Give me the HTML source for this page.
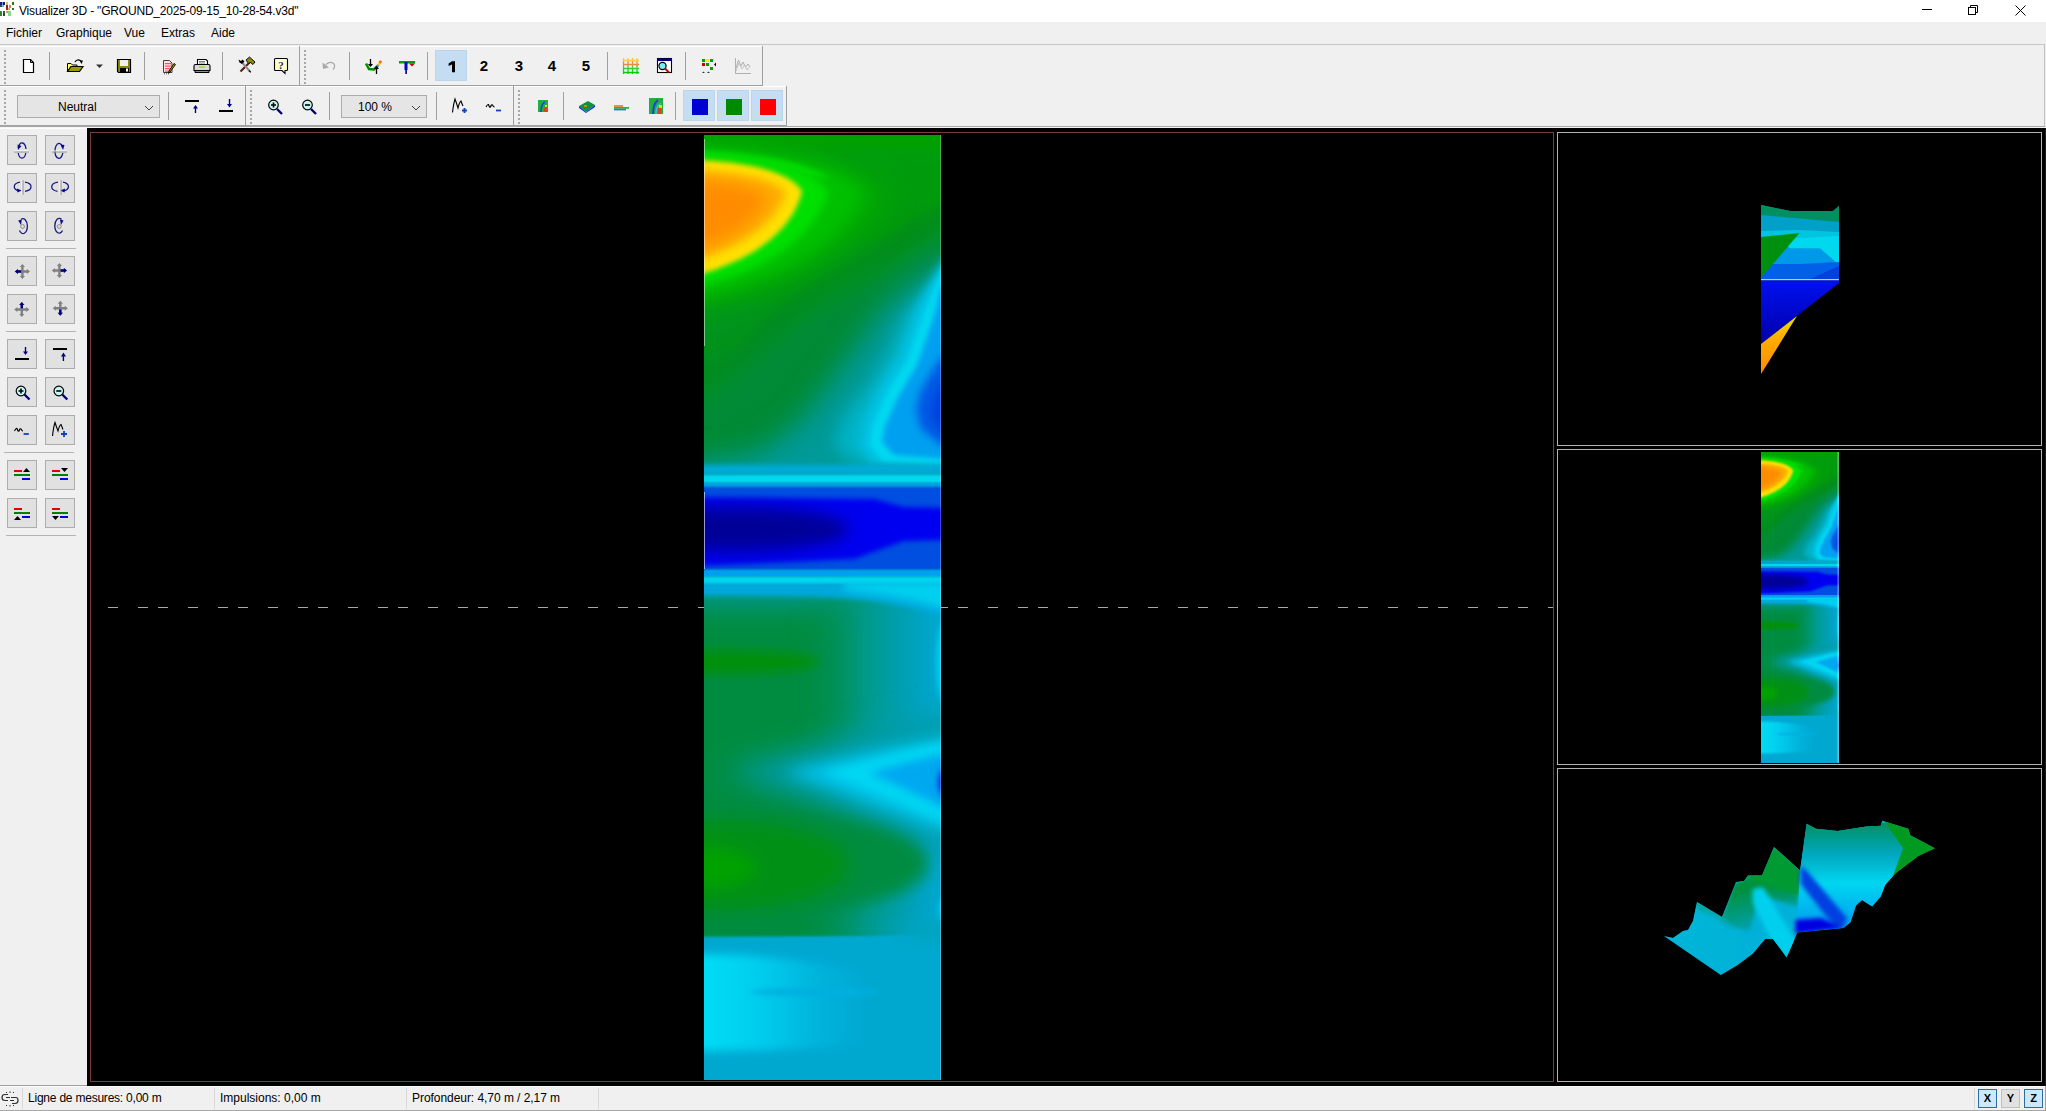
<!DOCTYPE html>
<html><head><meta charset="utf-8">
<style>
*{box-sizing:border-box;margin:0;padding:0}
html,body{width:2046px;height:1111px;overflow:hidden;background:#f0f0f0;font-family:"Liberation Sans",sans-serif;font-size:12px;color:#000}
.a{position:absolute}
.mi{position:absolute;top:27px;font-size:12px;color:#000;line-height:12px}
.st{position:absolute;top:1092px;font-size:12px;line-height:12px;color:#000}
svg{position:absolute;overflow:visible}
</style></head><body>
<!-- title bar -->
<div class="a" style="left:0;top:0;width:2046px;height:22px;background:#fff"></div>
<div class="a" style="left:19px;top:5px;font-size:12px;line-height:12px;letter-spacing:-0.19px">Visualizer 3D - "GROUND_2025-09-15_10-28-54.v3d"</div>
<!-- menu -->
<div class="mi" style="left:6px">Fichier</div>
<div class="mi" style="left:56px">Graphique</div>
<div class="mi" style="left:124px">Vue</div>
<div class="mi" style="left:161px">Extras</div>
<div class="mi" style="left:211px">Aide</div>
<svg style="left:0;top:0" width="2046" height="1111" viewBox="0 0 2046 1111" shape-rendering="crispEdges">
<!-- app icon -->
<g>
<rect x="0" y="2" width="1.5" height="2.5" fill="#102080"/><rect x="1.5" y="2" width="1.5" height="2.5" fill="#8090e0"/><rect x="3" y="2" width="1.5" height="2.5" fill="#102070"/>
<rect x="6" y="2" width="2" height="2.5" fill="#e0c050"/><rect x="11.5" y="2" width="2.5" height="2.5" fill="#307030"/>
<rect x="0" y="4.5" width="2" height="2.5" fill="#206020"/><rect x="2" y="4.5" width="2" height="2.5" fill="#70b0d0"/><rect x="5.5" y="5" width="2.5" height="2.5" fill="#902020"/><rect x="8.5" y="5" width="2.5" height="2.5" fill="#d08070"/>
<rect x="5.5" y="7.5" width="2.5" height="2.5" fill="#b02020"/><rect x="8" y="7.5" width="2" height="2.5" fill="#e0b060"/><rect x="11.5" y="7.5" width="2.5" height="2.5" fill="#307030"/>
<rect x="0" y="10.5" width="2" height="2.5" fill="#408040"/><rect x="2.5" y="10.5" width="2" height="2.5" fill="#306030"/><rect x="5.5" y="10.5" width="2.5" height="2.5" fill="#d09090"/><rect x="8" y="10.5" width="3" height="2.5" fill="#90d090"/>
<rect x="0" y="13" width="2" height="3" fill="#308030"/><rect x="2.5" y="13" width="2" height="3" fill="#205020"/><rect x="8" y="13" width="3" height="3" fill="#80e080"/>
</g>
<!-- window controls -->
<g stroke="#000" stroke-width="1" fill="none" shape-rendering="geometricPrecision">
<line x1="1922" y1="9.5" x2="1932" y2="9.5"/>
<rect x="1968.5" y="7.5" width="7" height="7"/>
<path d="M1970.5 7.5V5.5H1977.5V12.5H1975.5"/>
<path d="M2015.5 5.5L2025.5 15.5M2025.5 5.5L2015.5 15.5"/>
</g>
<!-- menu/rebar lines -->
<rect x="0" y="44" width="2045" height="1" fill="#c6c6c6"/>
<rect x="2044" y="44" width="1" height="83" fill="#c0c0c0"/>
<rect x="0" y="126" width="2045" height="1" fill="#a8a8a8"/>
<rect x="0" y="127" width="2045" height="1" fill="#f4f4f4"/>
<rect x="0" y="128" width="87" height="1" fill="#fcfcfc"/>
<!-- toolbar frames: top/left white, bottom/right grey -->
<g fill="#fff">
<rect x="0" y="46" width="299" height="1"/><rect x="300" y="46" width="462" height="1"/>
<rect x="0" y="86" width="245" height="1"/><rect x="246" y="86" width="267" height="1"/><rect x="514" y="86" width="272" height="1"/>
</g>
<g fill="#a0a0a0">
<rect x="0" y="85" width="763" height="1"/><rect x="299" y="46" width="1" height="40"/><rect x="762" y="46" width="1" height="40"/>
<rect x="0" y="125" width="787" height="1"/><rect x="245" y="86" width="1" height="40"/><rect x="513" y="86" width="1" height="40"/><rect x="786" y="86" width="1" height="40"/>
</g>
<!-- grips -->
<g fill="#a8a8a8">
<path d="M4 50h1.5v1.5h-1.5zM4 54h1.5v1.5h-1.5zM4 58h1.5v1.5h-1.5zM4 62h1.5v1.5h-1.5zM4 66h1.5v1.5h-1.5zM4 70h1.5v1.5h-1.5zM4 74h1.5v1.5h-1.5zM4 78h1.5v1.5h-1.5zM4 82h1.5v1.5h-1.5z"/>
<path d="M304 50h1.5v1.5h-1.5zM304 54h1.5v1.5h-1.5zM304 58h1.5v1.5h-1.5zM304 62h1.5v1.5h-1.5zM304 66h1.5v1.5h-1.5zM304 70h1.5v1.5h-1.5zM304 74h1.5v1.5h-1.5zM304 78h1.5v1.5h-1.5zM304 82h1.5v1.5h-1.5z"/>
<path d="M4 90h1.5v1.5h-1.5zM4 94h1.5v1.5h-1.5zM4 98h1.5v1.5h-1.5zM4 102h1.5v1.5h-1.5zM4 106h1.5v1.5h-1.5zM4 110h1.5v1.5h-1.5zM4 114h1.5v1.5h-1.5zM4 118h1.5v1.5h-1.5zM4 122h1.5v1.5h-1.5z"/>
<path d="M250 90h1.5v1.5h-1.5zM250 94h1.5v1.5h-1.5zM250 98h1.5v1.5h-1.5zM250 102h1.5v1.5h-1.5zM250 106h1.5v1.5h-1.5zM250 110h1.5v1.5h-1.5zM250 114h1.5v1.5h-1.5zM250 118h1.5v1.5h-1.5zM250 122h1.5v1.5h-1.5z"/>
<path d="M518 90h1.5v1.5h-1.5zM518 94h1.5v1.5h-1.5zM518 98h1.5v1.5h-1.5zM518 102h1.5v1.5h-1.5zM518 106h1.5v1.5h-1.5zM518 110h1.5v1.5h-1.5zM518 114h1.5v1.5h-1.5zM518 118h1.5v1.5h-1.5zM518 122h1.5v1.5h-1.5z"/>
</g>
<!-- separators -->
<g fill="#a0a0a0">
<rect x="49" y="52" width="1" height="28"/><rect x="144" y="52" width="1" height="28"/><rect x="222" y="52" width="1" height="28"/>
<rect x="349" y="52" width="1" height="28"/><rect x="427" y="52" width="1" height="28"/><rect x="607" y="52" width="1" height="28"/><rect x="685" y="52" width="1" height="28"/>
<rect x="168" y="92" width="1" height="28"/><rect x="329" y="92" width="1" height="28"/><rect x="436" y="92" width="1" height="28"/>
<rect x="563" y="92" width="1" height="28"/><rect x="675" y="92" width="1" height="28"/>
</g>
<!-- checked buttons -->
<g fill="#c5ddf3" stroke="#bad6ef">
<rect x="435.5" y="50.5" width="31" height="30"/>
<rect x="683.5" y="90.5" width="31" height="30"/>
<rect x="717.5" y="90.5" width="31" height="30"/>
<rect x="751.5" y="90.5" width="31" height="30"/>
</g>
<rect x="692" y="99" width="16" height="16" fill="#0000d4"/>
<rect x="726" y="99" width="16" height="16" fill="#008a00"/>
<rect x="760" y="99" width="16" height="16" fill="#ff0000"/>
<!-- combos -->
<g fill="#e5e5e5" stroke="#adadad">
<rect x="17.5" y="95.5" width="142" height="22"/>
<rect x="341.5" y="95.5" width="85" height="22"/>
</g>
<g fill="none" stroke="#404040" stroke-width="1" shape-rendering="geometricPrecision">
<path d="M145 106L149 110L153 106"/>
<path d="M412 106L416 110L420 106"/>
</g>

<!-- sidebar -->
<g fill="#e1e1e1" stroke="#adadad">
<rect x="7.5" y="135.5" width="29" height="29"/><rect x="45.5" y="135.5" width="29" height="29"/>
<rect x="7.5" y="173.5" width="29" height="29"/><rect x="45.5" y="173.5" width="29" height="29"/>
<rect x="7.5" y="211.5" width="29" height="29"/><rect x="45.5" y="211.5" width="29" height="29"/>
<rect x="7.5" y="256.5" width="29" height="29"/><rect x="45.5" y="256.5" width="29" height="29"/>
<rect x="7.5" y="294.5" width="29" height="29"/><rect x="45.5" y="294.5" width="29" height="29"/>
<rect x="7.5" y="339.5" width="29" height="29"/><rect x="45.5" y="339.5" width="29" height="29"/>
<rect x="7.5" y="377.5" width="29" height="29"/><rect x="45.5" y="377.5" width="29" height="29"/>
<rect x="7.5" y="415.5" width="29" height="29"/><rect x="45.5" y="415.5" width="29" height="29"/>
<rect x="7.5" y="460.5" width="29" height="29"/><rect x="45.5" y="460.5" width="29" height="29"/>
<rect x="7.5" y="498.5" width="29" height="29"/><rect x="45.5" y="498.5" width="29" height="29"/>
</g>
<g fill="#b4b4b4">
<rect x="6" y="248" width="70" height="1"/><rect x="6" y="331" width="70" height="1"/><rect x="4" y="452" width="70" height="1"/><rect x="6" y="535" width="70" height="1"/>
</g>
<rect x="0" y="1085" width="87" height="1" fill="#a0a0a0"/>

<!-- main black -->
<rect x="87" y="128" width="1958" height="958" fill="#000"/>
<rect x="2045" y="128" width="1" height="958" fill="#1c1c1c"/>
<!-- dashed line -->
<line x1="108" y1="607.5" x2="1553" y2="607.5" stroke="#a8a8a8" stroke-width="1" stroke-dasharray="10 20 10 10 10 20"/>
<g fill="none" shape-rendering="crispEdges">
<rect x="90.5" y="132.5" width="1463" height="949" stroke="#7c3c3c"/>
<rect x="1557.5" y="132.5" width="484" height="313" stroke="#b4b4b4"/>
<rect x="1557.5" y="449.5" width="484" height="315" stroke="#b4b4b4"/>
<rect x="1557.5" y="768.5" width="484" height="313" stroke="#b4b4b4"/>
</g>

<!-- status bar -->
<rect x="0" y="1086" width="2046" height="1" fill="#fafafa"/>
<rect x="0" y="1110" width="2046" height="1" fill="#a8a8a8"/>
<g fill="#d8d8d8">
<rect x="22" y="1088" width="1" height="21"/><rect x="214" y="1088" width="1" height="21"/><rect x="406" y="1088" width="1" height="21"/><rect x="598" y="1088" width="1" height="21"/><rect x="1974" y="1088" width="1" height="21"/>
</g>
<rect x="1978.5" y="1089.5" width="18" height="18" fill="#cce8ff" stroke="#2d6ba3"/>
<rect x="2001.5" y="1089.5" width="18" height="18" fill="#e1e1e1" stroke="#c0c0c0"/>
<rect x="2024.5" y="1089.5" width="18" height="18" fill="#cce8ff" stroke="#2d6ba3"/>
<rect x="2045" y="1086" width="1" height="25" fill="#a0a0a0"/>
</svg>
<svg style="left:0;top:0" width="2046" height="1111" viewBox="0 0 2046 1111">
<defs>
<linearGradient id="gim" x1="0" y1="1" x2="1" y2="0"><stop offset="0" stop-color="#008000"/><stop offset="0.45" stop-color="#00a000"/><stop offset="0.55" stop-color="#3060d0"/><stop offset="0.75" stop-color="#f0e000"/><stop offset="1" stop-color="#ff3000"/></linearGradient>
<linearGradient id="ggrid" x1="0" y1="0" x2="0" y2="1"><stop offset="0" stop-color="#ffd040"/><stop offset="0.3" stop-color="#ff8040"/><stop offset="0.6" stop-color="#40d040"/><stop offset="1" stop-color="#00d000"/></linearGradient>
</defs>
<!-- new doc -->
<path d="M23.5,59.5H30.5L33.5,62.5V72.5H23.5Z" fill="#fff" stroke="#000" stroke-width="1.2"/>
<path d="M30.5,59.5V62.5H33.5" fill="none" stroke="#000" stroke-width="1"/>
<!-- open folder -->
<path d="M67.5,63.5H71L72.5,65H77V66.5H71L67.5,71.5Z" fill="#ffff70" stroke="#000" stroke-width="1"/>
<path d="M67.5,71.5L71,66.5H83L79.5,71.5Z" fill="#9a9a00" stroke="#000" stroke-width="1.2"/>
<path d="M75,62 Q77,58.5 81,61" fill="none" stroke="#000" stroke-width="1.2"/>
<path d="M79.5,60.5L83,60.5L81.5,64Z" fill="#000"/>
<path d="M96,64.5H103L99.5,68Z" fill="#333"/>
<!-- save -->
<path d="M117.5,59.5H130.5V72.5H118.5L117.5,71.5Z" fill="#8a8a00" stroke="#000" stroke-width="1.2"/>
<rect x="120" y="60" width="8" height="6" fill="#f0f0f0"/>
<rect x="120" y="68" width="9" height="4.5" fill="#000"/>
<rect x="126" y="68.5" width="2" height="3" fill="#fff"/>
<!-- edit doc -->
<path d="M163.5,60.5H169.5L172,63V72.5H163.5Z" fill="#ffe0e0" stroke="#404040" stroke-width="1"/>
<g fill="#ff5060"><rect x="165" y="63" width="6" height="1.2"/><rect x="165" y="65.5" width="6" height="1.2"/><rect x="165" y="68" width="6" height="1.2"/><rect x="165" y="70.5" width="6" height="1.2"/></g>
<path d="M175.5,64.5L170,72L168.5,73.5L169,71L174,63.5Z" fill="#a0a000" stroke="#000" stroke-width="0.9"/>
<g fill="#505050"><rect x="164" y="73.3" width="1" height="1"/><rect x="166" y="73.3" width="1" height="1"/><rect x="168" y="73.3" width="1" height="1"/></g>
<!-- printer -->
<path d="M197.5,64.5V59.5H206L207.5,61V64.5" fill="#fff" stroke="#000" stroke-width="1.1"/>
<path d="M199,61.5H205M199,63H205" stroke="#606060" stroke-width="0.8"/>
<path d="M195.5,64.5H208.5Q210,64.5 210,66V70.5H194V66Q194,64.5 195.5,64.5Z" fill="#d8d8d8" stroke="#000" stroke-width="1.1"/>
<rect x="199" y="66.5" width="6" height="1.2" fill="#80e000"/>
<path d="M195,70.5H209V72.5H195Z" fill="#909090" stroke="#000" stroke-width="1"/>
<!-- tools -->
<path d="M240.5,71.5L250.5,61.5" stroke="#5a1a10" stroke-width="2.2"/>
<path d="M246,60L249.5,57L255,62L253,64.5L250.5,62.5L248.5,63.5Z" fill="#8a8a00" stroke="#000" stroke-width="0.9"/>
<path d="M250,71.5L242.5,63" stroke="#909090" stroke-width="2"/>
<path d="M238.5,59.5L239.5,62.5L242,64L244.5,61.5L242.5,59.5L241,61Z" fill="#000"/>
<path d="M249,70.5L250.8,72.3" stroke="#000" stroke-width="1.2"/>
<!-- help -->
<path d="M275.5,58.5H286.5Q287.5,58.5 287.5,59.5V69.5Q287.5,70.5 286.5,70.5H285V73.5L282,70.5H275.5Q274.5,70.5 274.5,69.5V59.5Q274.5,58.5 275.5,58.5Z" fill="#ffffc8" stroke="#000" stroke-width="1.1"/>
<text x="281" y="68.5" font-family="Liberation Serif" font-weight="bold" font-size="11" fill="#202090" text-anchor="middle">?</text>
<path d="M452,61.2H455V72.2H452V64.6L448.6,66V63.6Z" fill="#000"/>
<!-- undo grey -->
<path d="M326,64.5 Q330,61 333.5,63.5 Q336,66 333,69.5" fill="none" stroke="#a8a8a8" stroke-width="1.2"/>
<path d="M322.5,62.5L323,69L329,67.5Z" fill="#a8a8a8"/>
<!-- import -->
<path d="M366,63.5L369,69L374,69.5L378,65.5L381,61" fill="none" stroke="url(#gim)" stroke-width="2.6"/>
<path d="M370.5,59V66" stroke="#000" stroke-width="1.3"/><path d="M368,64H373L370.5,67Z" fill="#000"/>
<path d="M376.5,74V67" stroke="#000" stroke-width="1.3"/><path d="M374,69H379L376.5,66Z" fill="#000"/>
<!-- T icon -->
<rect x="399" y="61" width="16" height="2.5" fill="#00a000"/>
<rect x="404.5" y="62" width="3" height="8" fill="#0000d0"/>
<rect x="405.3" y="69" width="1.6" height="5" fill="#000080"/>
<path d="M409,63.5H415L412,66.5Z" fill="#d00000"/>
<!-- grid -->
<g stroke="url(#ggrid)" stroke-width="1.3" fill="none">
<path d="M623.5,58V74M628,58V74M632.5,58V74M637,58V74"/>
<path d="M623,60.5H639M623,64.5H639M623,68.5H639M623,72.5H639"/>
</g>
<!-- window search -->
<rect x="657.5" y="58.5" width="14" height="14" fill="#fff" stroke="#000" stroke-width="1.1"/>
<rect x="657.5" y="58.5" width="14" height="2.5" fill="#000080"/>
<circle cx="662.5" cy="66" r="3.6" fill="#80e8f0" stroke="#000" stroke-width="1.2"/>
<path d="M665,68.5L669,72.5" stroke="#c00000" stroke-width="1.8"/>
<!-- dots icon -->
<g fill="#00a000"><rect x="702" y="59" width="3" height="3"/><rect x="710" y="59" width="3" height="3"/><rect x="706" y="63" width="3" height="3"/><rect x="710" y="67" width="3" height="3"/></g>
<rect x="706" y="59" width="3" height="3" fill="#f0f000"/>
<rect x="702" y="63" width="3" height="3" fill="#d00000"/>
<path d="M716,62.5L714,64.5L716,66.5Z" fill="#000"/>
<path d="M702,73H705L703.5,71.5ZM707,73H710L708.5,71.5Z" fill="#303030"/>
<!-- chart grey -->
<path d="M735.5,58V73.5H751" fill="none" stroke="#b0b0b0" stroke-width="1"/>
<path d="M736,68L738.5,60L741,66L743,62L745.5,67L748,64L750,67" fill="none" stroke="#b0b0b0" stroke-width="1"/>
<path d="M736,71L739,63L742,69L744.5,65L747,70L750,66" fill="none" stroke="#c4c4c4" stroke-width="1"/>

<!-- row 2 -->
<rect x="185" y="100" width="14" height="2" fill="#000"/>
<path d="M195.5,113V107" stroke="#000080" stroke-width="1.4"/><path d="M193,108.5H198L195.5,105Z" fill="#000080"/>
<rect x="219" y="110" width="14" height="2" fill="#000"/>
<path d="M229.5,99V105" stroke="#000080" stroke-width="1.4"/><path d="M227,104H232L229.5,107.5Z" fill="#000080"/>
<!-- zoom -->
<path d="M277,109L282,114" stroke="#000080" stroke-width="2.4"/>
<circle cx="273.5" cy="105" r="4.8" fill="#c8f4f4" stroke="#000" stroke-width="1.2"/>
<path d="M271,105H276M273.5,102.5V107.5" stroke="#000" stroke-width="1.6"/>
<path d="M311,109L316,114" stroke="#000080" stroke-width="2.4"/>
<circle cx="307.5" cy="105" r="4.8" fill="#c8f4f4" stroke="#000" stroke-width="1.2"/>
<path d="M305,105H310" stroke="#000" stroke-width="1.6"/>
<!-- M+ m- -->
<path d="M452.5,112.5Q453.5,104 455,99Q456.5,103 458,108Q459.5,102 461,101Q462,104 463,106" fill="none" stroke="#000" stroke-width="1.1"/>
<path d="M462,110.5H467M464.5,108V113" stroke="#1040c0" stroke-width="1.8"/>
<path d="M486,107Q487.5,104 488.5,104.5Q489.5,108 490.5,107Q491.5,104 492.5,105Q493.5,107 494.5,107" fill="none" stroke="#000" stroke-width="1.1"/>
<path d="M496,110.5H501" stroke="#1040c0" stroke-width="1.8"/>
<!-- heat icons -->
<rect x="538" y="100" width="10" height="12" fill="#20b040"/>
<path d="M541,112Q541,104 545,102" fill="none" stroke="#2040e0" stroke-width="1.6"/>
<rect x="544" y="107" width="3" height="5" fill="#e04020"/><rect x="545" y="105" width="2" height="2" fill="#e0e000"/>
<path d="M579,106L588,101L595,105L586,112Z" fill="#109040"/>
<path d="M579,106L586,112L595,105L595,107L586,113L579,108Z" fill="#1030e0"/>
<rect x="584" y="105" width="3" height="2" fill="#e08000"/>
<rect x="614" y="105" width="9" height="2" fill="#f09040"/>
<rect x="614" y="107" width="15" height="1.8" fill="#30b040"/>
<rect x="614" y="108.8" width="12" height="1.6" fill="#2080d0"/>
<rect x="649" y="98" width="14" height="16" fill="#20b040"/>
<path d="M653,114Q653,104 658,100" fill="none" stroke="#2040e0" stroke-width="2"/>
<path d="M656,114Q656,106 661,103" fill="none" stroke="#40c0f0" stroke-width="1.2"/>
<rect x="658" y="108" width="3" height="6" fill="#e04020"/><rect x="659" y="105" width="3" height="3" fill="#e0e000"/>

<!-- status icon -->
<g fill="none" stroke="#303030" stroke-width="1.2">
<path d="M8,1094.5H5Q2,1094.5 2,1097.5Q2,1100.5 5,1100.5H8M11,1097.5H16Q18,1097.5 18,1100.5Q18,1103.5 15,1103.5H12"/>
<path d="M6,1097.5H10M10,1100.5H14"/>
<path d="M6,1092L7,1093M10,1091.5V1093M14,1092L13,1093M6,1106L7,1105M10,1106.5V1105M14,1106L13,1105" stroke-width="1"/>
</g>
</svg>
<svg style="left:0;top:0" width="100" height="1111" viewBox="0 0 100 1111">
<g fill="none" stroke="#1a1a80" stroke-width="1.3">
<!-- row1 A: horizontal axis -->
<path d="M18.3,148 A4,7.5 0 0 1 26,149"/>
<path d="M18.2,153 A4,7.5 0 0 0 25.8,153"/>
<!-- row1 B -->
<path d="M56,146 A4,7.5 0 0 1 62.5,147 M55,150 A4,7.5 0 0 0 62.8,153"/>
<path d="M55,150 A4,7.5 0 0 1 56,146"/>
<!-- row2 A: vertical axis -->
<path d="M20,182.2 A8,4.7 0 0 0 19,191 M25,182.2 A8,4.7 0 0 1 25,191.3"/>
<!-- row2 B -->
<path d="M58,182.2 A8,4.7 0 0 0 57.5,191.3 M63,182.2 A8,4.7 0 0 1 63.5,191"/>
<!-- row3 A -->
<path d="M21,219.5 A4.4,7.8 0 0 1 27.4,226 A4.4,7.8 0 0 1 19.5,230.5"/>
<!-- row3 B -->
<path d="M61.5,219.5 A4.4,7.8 0 0 0 54.8,226 A4.4,7.8 0 0 0 62.5,230.5"/>
</g>
<g fill="#0a0a90">
<path d="M17.5,144.5L21.5,146L18,150Z"/>
<path d="M60.5,144.5L64.5,145L63,150Z"/>
<path d="M16.8,188.5L21.8,190.5L17.5,192.5Z"/>
<path d="M65,188.5L60.2,190.5L64.5,192.5Z"/>
<path d="M18.2,220.5L21.8,219.5L21,225Z"/>
<path d="M63.5,220.5L60,219.5L61,225Z"/>
</g>
<!-- axis lines -->
<rect x="14" y="150.5" width="15" height="1" fill="#fff"/><rect x="14" y="151.5" width="15" height="1" fill="#909090"/>
<rect x="52" y="150.5" width="15" height="1" fill="#fff"/><rect x="52" y="151.5" width="15" height="1" fill="#909090"/>
<rect x="21.5" y="180" width="1" height="15" fill="#fff"/><rect x="22.5" y="180" width="1" height="15" fill="#909090"/>
<rect x="59.5" y="180" width="1" height="15" fill="#fff"/><rect x="60.5" y="180" width="1" height="15" fill="#909090"/>
<circle cx="22.6" cy="226.5" r="2" fill="#d8d8d8" stroke="#808080" stroke-width="0.8"/>
<circle cx="59.2" cy="226.5" r="2" fill="#d8d8d8" stroke="#808080" stroke-width="0.8"/>
<!-- four-way arrows -->
<g id="fw">
<path d="M22.4,264L25,267H23.6V270.3H26.9V269L30,271.5L26.9,274V272.7H23.6V276H25L22.4,279L19.8,276H21.2V272.7H17.9V274L14.8,271.5L17.9,269V270.3H21.2V267H19.8Z" fill="#808080"/>
</g>
<path d="M14.8,271.5L17.9,269V270.3H21.2V272.7H17.9V274Z" fill="#000080"/>
<use href="#fw" transform="translate(37,-1)"/>
<path d="M67,270.5L63.9,268V269.3H60.6V271.7H63.9V273Z" fill="#000080"/>
<use href="#fw" transform="translate(-0.6,38)"/>
<path d="M21.8,302L24.4,305H23V308.3H20.6V305H19.2Z" fill="#000080"/>
<use href="#fw" transform="translate(37.9,36.7)"/>
<path d="M60.3,315.7L62.9,312.7H61.5V309.4H59.1V312.7H57.7Z" fill="#000080"/>
<!-- row6 -->
<rect x="15" y="358" width="14" height="2" fill="#000"/>
<path d="M25.5,347V352" stroke="#000080" stroke-width="1.4"/><path d="M23,351.5H28L25.5,355Z" fill="#000080"/>
<rect x="53" y="348" width="14" height="2" fill="#000"/>
<path d="M63.4,361V356" stroke="#000080" stroke-width="1.4"/><path d="M61,356.5H66L63.4,352.5Z" fill="#000080"/>
<!-- row7 zoom -->
<path d="M24.5,394.5L29.5,399.5" stroke="#000080" stroke-width="2.4"/>
<circle cx="21" cy="391" r="4.8" fill="#c8f4f4" stroke="#000" stroke-width="1.2"/>
<path d="M18.5,391H23.5M21,388.5V393.5" stroke="#000" stroke-width="1.6"/>
<path d="M62.3,394.5L67.3,399.5" stroke="#000080" stroke-width="2.4"/>
<circle cx="58.8" cy="391" r="4.8" fill="#c8f4f4" stroke="#000" stroke-width="1.2"/>
<path d="M56.3,391H61.3" stroke="#000" stroke-width="1.6"/>
<!-- row8 -->
<path d="M14.5,431Q16,428 17,428.5Q18,432 19,431Q20,428 21,429Q22,431 23,431" fill="none" stroke="#000" stroke-width="1.1"/>
<path d="M23.6,434H28.8" stroke="#1040c0" stroke-width="1.8"/>
<path d="M52.5,436Q53.5,427 55,422.5Q56.5,427 58,431Q59.5,425 61,424.5Q62,427 63,429.5" fill="none" stroke="#000" stroke-width="1.1"/>
<path d="M61,434H67M64,431V437" stroke="#1040c0" stroke-width="1.8"/>
<!-- rows 9-10 -->
<g>
<rect x="14" y="470" width="8" height="2" fill="#e00000"/><rect x="14" y="474" width="16" height="2" fill="#008000"/><rect x="22" y="478" width="8" height="2" fill="#0000e0"/>
<path d="M23,472H30L26.5,468Z" fill="#000"/>
<rect x="52" y="470" width="8" height="2" fill="#e00000"/><rect x="52" y="474" width="16" height="2" fill="#008000"/><rect x="60" y="478" width="8" height="2" fill="#0000e0"/>
<path d="M61,468H68L64.5,472Z" fill="#000"/>
<rect x="14" y="508" width="8" height="2" fill="#e00000"/><rect x="14" y="512" width="16" height="2" fill="#008000"/><rect x="22" y="516" width="8" height="2" fill="#0000e0"/>
<path d="M14,520H21L17.5,516Z" fill="#000"/>
<rect x="52" y="508" width="8" height="2" fill="#e00000"/><rect x="52" y="512" width="16" height="2" fill="#008000"/><rect x="60" y="516" width="8" height="2" fill="#0000e0"/>
<path d="M52,516H59L55.5,520Z" fill="#000"/>
</g>
</svg>
<svg style="left:704px;top:135px" width="237" height="945" viewBox="0 0 237 945" preserveAspectRatio="none">
<defs>
<clipPath id="hc"><rect x="0" y="0" width="237" height="945"/></clipPath>
<filter id="f1" filterUnits="userSpaceOnUse" x="-80" y="-80" width="400" height="1110"><feGaussianBlur stdDeviation="1.2"/></filter>
<filter id="f2" filterUnits="userSpaceOnUse" x="-80" y="-80" width="400" height="1110"><feGaussianBlur stdDeviation="2.5"/></filter>
<filter id="f4" filterUnits="userSpaceOnUse" x="-80" y="-80" width="400" height="1110"><feGaussianBlur stdDeviation="4"/></filter>
<filter id="f8" filterUnits="userSpaceOnUse" x="-80" y="-80" width="400" height="1110"><feGaussianBlur stdDeviation="8"/></filter>
<filter id="f14" filterUnits="userSpaceOnUse" x="-80" y="-80" width="400" height="1110"><feGaussianBlur stdDeviation="14"/></filter>
<linearGradient id="gnav" x1="0" x2="1" y1="0" y2="0"><stop offset="0" stop-color="#000098"/><stop offset="0.45" stop-color="#0000d8"/><stop offset="0.8" stop-color="#0000ff"/><stop offset="1" stop-color="#0000ff"/></linearGradient>
</defs>
<g id="heatg" clip-path="url(#hc)">
<!-- base seagreen -->
<rect x="-20" y="-20" width="280" height="990" fill="#008c40"/>
<!-- top green region -->
<linearGradient id="ggr" x1="0" x2="0" y1="0" y2="1" gradientUnits="objectBoundingBox"><stop offset="0" stop-color="#009e06"/><stop offset="0.4" stop-color="#009812"/><stop offset="0.7" stop-color="#009220"/><stop offset="1" stop-color="#008c34"/></linearGradient>
<path d="M-30,-30 L270,-30 L270,80 L180,140 L90,200 L30,260 L-30,330 Z" fill="url(#ggr)" filter="url(#f14)"/>
<rect x="-20" y="-20" width="280" height="34" fill="#00a000" filter="url(#f4)"/>
<!-- dark green diagonal -->
<path d="M260,70 L96,165 L41,220 L-20,255" fill="none" stroke="#008a1c" stroke-width="16" filter="url(#f8)"/>
<path d="M270,90 L200,130 L120,170 L60,215 L-30,300 L-30,330 L270,330 Z" fill="#008a34" filter="url(#f14)"/>
<!-- teal region top-right -->
<path d="M270,112 L225,135 L180,172 L150,215 L125,250 L95,288 L55,318 L-30,332 L-30,470 L270,470 Z" fill="#009a98" filter="url(#f14)"/>
<path d="M270,128 L226,150 L200,180 L186,215 L165,250 L140,282 L130,310 L150,328 L270,330 Z" fill="#00b4c8" filter="url(#f8)"/>
<!-- bright green halo -->
<path d="M-30,10 C80,10 160,30 185,58 C165,110 90,160 -30,175 Z" fill="#00aa06" filter="url(#f14)"/>
<path d="M-30,13 C70,13 140,30 160,57 C145,102 80,152 -30,165 Z" fill="#00c000" filter="url(#f8)"/>
<path d="M-30,17 C60,18 110,34 124,57 C114,94 70,140 -30,155 Z" fill="#00e000" filter="url(#f4)"/>
<path d="M-30,17 C60,17 105,29 128,44 C100,40 70,33 -30,27 Z" fill="#00dc00" filter="url(#f2)"/>
<!-- yellow -->
<path d="M-30,24 C45,25 86,37 98,56 C92,84 64,126 -30,146 Z" fill="#ffe000" filter="url(#f2)"/>
<!-- orange -->
<path d="M-30,36 C40,36 72,45 82,58 C74,80 50,112 -30,131 Z" fill="#ffae00" filter="url(#f4)"/>
<path d="M-30,44 C25,44 57,53 64,62 C57,80 38,104 -30,121 Z" fill="#ff8c00" filter="url(#f8)"/>
<!-- cyan ridge region top-right -->
<path d="M270,110 L237,128 L213,172 L195,222 L176,252 L160,286 L156,310 L166,328 L270,332 Z" fill="#00c2e4" filter="url(#f4)"/>
<path d="M270,120 L237,136 L221,176 L203,226 L184,256 L169,289 L166,310 L178,326 L270,330 Z" fill="#00d8f0" filter="url(#f2)"/>
<path d="M270,140 L237,152 L230,182 L213,230 L195,260 L181,291 L178,307 L190,320 L270,326 Z" fill="#00a0f0" filter="url(#f2)"/>
<path d="M270,215 L237,222 L227,238 L216,257 L212,275 L217,294 L237,310 L270,312 Z" fill="#0058e4" filter="url(#f4)"/>
<path d="M270,245 L237,250 L230,265 L228,280 L237,296 L270,298 Z" fill="#0040e0" filter="url(#f4)"/>
<!-- horizontal bands -->
<rect x="-20" y="330" width="280" height="10" fill="#00aad8" filter="url(#f2)"/>
<rect x="-20" y="340" width="280" height="8" fill="#00d8f0" filter="url(#f1)"/>
<rect x="-20" y="348" width="280" height="4" fill="#00a0f0" filter="url(#f1)"/>
<rect x="-20" y="352" width="280" height="83" fill="#0050e0" filter="url(#f1)"/>
<path d="M-30,362 L170,364 L200,372 L270,373 L270,404 L200,406 L150,424 L-30,432 Z" fill="#0000f0" filter="url(#f2)"/>
<ellipse cx="30" cy="394" rx="115" ry="22" fill="#000098" filter="url(#f8)"/>
<rect x="-20" y="435" width="280" height="7" fill="#00a0f0" filter="url(#f1)"/>
<rect x="-20" y="442" width="280" height="8" fill="#00d8f0" filter="url(#f1)"/>
<rect x="-20" y="450" width="280" height="8" fill="#00a8e0" filter="url(#f1)"/>
<!-- lower section -->
<linearGradient id="gteal" gradientUnits="userSpaceOnUse" x1="90" y1="0" x2="237" y2="0"><stop offset="0" stop-color="#008c40" stop-opacity="0"/><stop offset="0.5" stop-color="#009a8c"/><stop offset="0.85" stop-color="#00a2c2"/><stop offset="1" stop-color="#00a8d0"/></linearGradient>
<rect x="90" y="455" width="180" height="350" fill="url(#gteal)" filter="url(#f4)"/>
<path d="M-30,449 L270,449 L270,494 Q230,472 150,464 Q80,460 -30,460 Z" fill="#00a8dc" filter="url(#f2)"/>
<path d="M140,447 L270,447 L270,486 Q225,464 140,455 Z" fill="#00d0f0" filter="url(#f4)"/>
<ellipse cx="242" cy="527" rx="10" ry="44" fill="#00ccf0" filter="url(#f2)"/>
<ellipse cx="242" cy="776" rx="8" ry="14" fill="#00c8f0" filter="url(#f2)"/>
<!-- green bands left -->
<ellipse cx="20" cy="527" rx="95" ry="12" fill="#009010" filter="url(#f4)"/>
<!-- V shape -->
<path d="M20,637 C100,615 180,586 270,576 L270,722 C180,694 100,662 20,637 Z" fill="#009ca8" filter="url(#f14)"/>
<path d="M80,637 C130,626 190,608 270,598 L270,708 C190,680 130,652 80,637 Z" fill="#00c4ea" filter="url(#f8)"/>
<path d="M120,637 C160,628 210,612 270,602 L270,700 C210,675 160,650 120,637 Z" fill="#00d6f2" filter="url(#f4)"/>
<path d="M165,638 C195,630 225,620 270,614 L270,686 C225,667 195,650 165,638 Z" fill="#00a8f0" filter="url(#f4)"/>
<ellipse cx="244" cy="648" rx="9" ry="17" fill="#0060e8" filter="url(#f4)"/>
<ellipse cx="238" cy="647" rx="3" ry="10" fill="#0030e0" filter="url(#f2)"/>
<!-- D green -->
<ellipse cx="90" cy="728" rx="135" ry="48" fill="#008c40" filter="url(#f8)"/>
<ellipse cx="20" cy="730" rx="125" ry="45" fill="#009014" filter="url(#f8)"/>
<ellipse cx="-10" cy="733" rx="62" ry="22" fill="#00a200" filter="url(#f8)"/>
<!-- bottom -->
<path d="M-30,802 L160,801 L270,797 L270,970 L-30,970 Z" fill="#00a8d0" filter="url(#f1)"/>
<path d="M180,802 L215,790 L270,775 L270,810 Z" fill="#00a4c0" filter="url(#f8)"/>
<linearGradient id="gcy" gradientUnits="userSpaceOnUse" x1="0" y1="0" x2="160" y2="0"><stop offset="0" stop-color="#00dcf4"/><stop offset="0.35" stop-color="#00cdee"/><stop offset="0.7" stop-color="#00b4dc"/><stop offset="1" stop-color="#00a8d0"/></linearGradient>
<path d="M-30,818 L40,820 Q140,828 200,850 Q150,880 200,905 Q100,917 -30,916 Z" fill="url(#gcy)" filter="url(#f4)"/>
<ellipse cx="110" cy="857" rx="65" ry="4" fill="#00b0e0" filter="url(#f2)"/>
</g>
<rect x="0" y="4" width="1" height="207" fill="rgba(255,255,255,0.5)"/>
<rect x="0" y="357" width="1" height="77" fill="rgba(255,255,255,0.6)"/>
<rect x="236" y="0" width="1" height="945" fill="rgba(255,255,255,0.25)"/>
</svg>
<!-- P2: scaled heatmap -->
<svg style="left:1761px;top:452px" width="78" height="311" viewBox="0 0 237 945" preserveAspectRatio="none"><use href="#heatg"/><rect x="232" y="0" width="5" height="945" fill="rgba(255,255,255,0.35)"/></svg>
<!-- P1 + P3 -->
<svg style="left:0;top:0" width="2046" height="1111" viewBox="0 0 2046 1111">
<defs>
<linearGradient id="p1b" x1="0" y1="0" x2="0" y2="1"><stop offset="0" stop-color="#0010f0"/><stop offset="1" stop-color="#0000a8"/></linearGradient>
<linearGradient id="p1o" x1="0" y1="0" x2="0" y2="1"><stop offset="0" stop-color="#e8e000"/><stop offset="0.35" stop-color="#ffb000"/><stop offset="1" stop-color="#ff8800"/></linearGradient>
<linearGradient id="p3r" x1="0" y1="0" x2="0" y2="1"><stop offset="0" stop-color="#009060"/><stop offset="0.3" stop-color="#00a8c0"/><stop offset="0.55" stop-color="#00d6f0"/><stop offset="1" stop-color="#0098f0"/></linearGradient>
<linearGradient id="p3l" x1="0" y1="0" x2="1" y2="1"><stop offset="0" stop-color="#00d0ec"/><stop offset="0.5" stop-color="#00b0d8"/><stop offset="1" stop-color="#00c0e0"/></linearGradient>
<linearGradient id="p3g" x1="0" y1="0" x2="0.3" y2="1"><stop offset="0" stop-color="#009a20"/><stop offset="0.6" stop-color="#009040"/><stop offset="1" stop-color="#00a0a0"/></linearGradient>
<clipPath id="p3c"><path d="M1664,936 L1673,938 L1683,931 L1688,930 L1693,921 L1697,902 L1722,917 L1736,882 L1744,881 L1748,875.5 L1762,875.5 L1774,847 L1800,870.5 L1806.6,823.7 L1816,828.7 L1837.6,830.9 L1866.4,826.6 L1880.8,825.8 L1882.2,820.8 L1908.2,828.7 L1910.3,835.2 L1934.8,848.2 L1918.2,856 L1895.2,873.4 L1885.1,884.9 L1880.8,896.4 L1872.2,906.5 L1862.1,900 L1856.3,905 L1850.6,922.3 L1843.4,928.1 L1797.3,932.4 L1794.4,939.6 L1786.6,957.4 L1772.9,939 L1765.2,939 L1753,953.5 L1737.7,965 L1720.8,975 Z"/></clipPath>
<filter id="pb" x="-20%" y="-20%" width="140%" height="140%"><feGaussianBlur stdDeviation="2"/></filter>
</defs>
<!-- P1 -->
<path d="M1761,205 L1790,211 L1833,211 L1839,206 L1839,280 L1761,280 Z" fill="#00a0c8"/>
<path d="M1761,205 L1790,211 L1833,211 L1839,206 L1839,222 L1761,215 Z" fill="#008f60"/>
<path d="M1761,231 L1800,230 L1839,232 L1839,240 L1761,238 Z" fill="#00c4e0"/>
<path d="M1780,239 L1839,236 L1839,265 L1820,248.5 L1790,248.5 Z" fill="#00d8f0"/>
<path d="M1770,248.5 L1820,248.5 L1839,265 L1839,278 L1761,278 Z" fill="#0098e8"/>
<path d="M1761,264 L1800,264 L1839,262 L1839,279 L1761,279 Z" fill="#0060e8"/>
<path d="M1810,279 L1839,266 L1839,279 Z" fill="#0040e0"/>
<path d="M1761,237 L1799.5,233 L1761,278 Z" fill="#009010"/>
<rect x="1761" y="279" width="78" height="1.5" fill="#a8d0ff"/>
<path d="M1761,280.5 L1839,280.5 L1839,283 L1761,344 Z" fill="url(#p1b)"/>
<path d="M1797,316 L1761,344 L1761,374 Z" fill="url(#p1o)"/>
<!-- P3 -->
<g clip-path="url(#p3c)">
<rect x="1650" y="810" width="300" height="180" fill="url(#p3l)"/>
<path d="M1694,900 L1721.8,917.2 L1733.8,883.8 L1745.8,877.8 L1762.9,875.3 L1774.8,847.9 L1800.5,870.1 L1797.1,906 L1759.5,895.8 L1750,930 L1728,928 L1712,915 L1700,912 Z" fill="url(#p3g)" filter="url(#pb)"/>
<path d="M1664,936 L1697,902 L1722,917 L1745,935 L1738,965 L1721,975 Z" fill="#00b4d6" filter="url(#pb)" opacity="0.6"/>
<path d="M1774,847 L1800,870.5 L1798,895 L1765,885 L1745,878 Z" fill="#009a30" filter="url(#pb)"/>
<path d="M1752.6,888.9 L1762.9,887.2 L1797.1,943.7 L1786.8,957.3 L1769.7,936.8 L1752.6,902.6 Z" fill="#00d0ee" filter="url(#pb)"/>
<path d="M1800,870.5 L1806.6,823.7 L1880,822 L1908,829 L1910,835 L1895,873 L1881,896 L1872,906.5 L1856,905 L1850,922 L1843,928 L1797,932 Z" fill="url(#p3r)"/>
<path d="M1800.5,866 L1806,870 L1847,918 L1843.3,928 L1834.7,927 L1800.5,884 Z" fill="#0040e0" filter="url(#pb)"/>
<path d="M1795.4,919.7 L1821,918 L1843,928 L1795.4,934 Z" fill="#0000e0" filter="url(#pb)"/>
<path d="M1882,818 L1912,828 L1940,848 L1918,858 L1893,876 L1903,848 Z" fill="#009a20"/>
</g>
</svg>
<div class="a" style="left:58px;top:101px;font-size:12px;line-height:12px">Neutral</div>
<div class="a" style="left:358px;top:101px;font-size:12px;line-height:12px">100 %</div>
<div class="a" style="left:468px;top:58px;width:32px;text-align:center;font-size:15px;font-weight:bold;line-height:15px">2</div>
<div class="a" style="left:503px;top:58px;width:32px;text-align:center;font-size:15px;font-weight:bold;line-height:15px">3</div>
<div class="a" style="left:536px;top:58px;width:32px;text-align:center;font-size:15px;font-weight:bold;line-height:15px">4</div>
<div class="a" style="left:570px;top:58px;width:32px;text-align:center;font-size:15px;font-weight:bold;line-height:15px">5</div>
<div class="st" style="left:28px;letter-spacing:-0.22px">Ligne de mesures: 0,00 m</div>
<div class="st" style="left:220px">Impulsions: 0,00 m</div>
<div class="st" style="left:412px;letter-spacing:-0.05px">Profondeur: 4,70 m / 2,17 m</div>
<div class="a" style="left:1978px;top:1093px;width:19px;text-align:center;font-size:11px;font-weight:bold;line-height:11px">X</div>
<div class="a" style="left:2001px;top:1093px;width:19px;text-align:center;font-size:11px;font-weight:bold;line-height:11px">Y</div>
<div class="a" style="left:2024px;top:1093px;width:19px;text-align:center;font-size:11px;font-weight:bold;line-height:11px">Z</div>
</body></html>
